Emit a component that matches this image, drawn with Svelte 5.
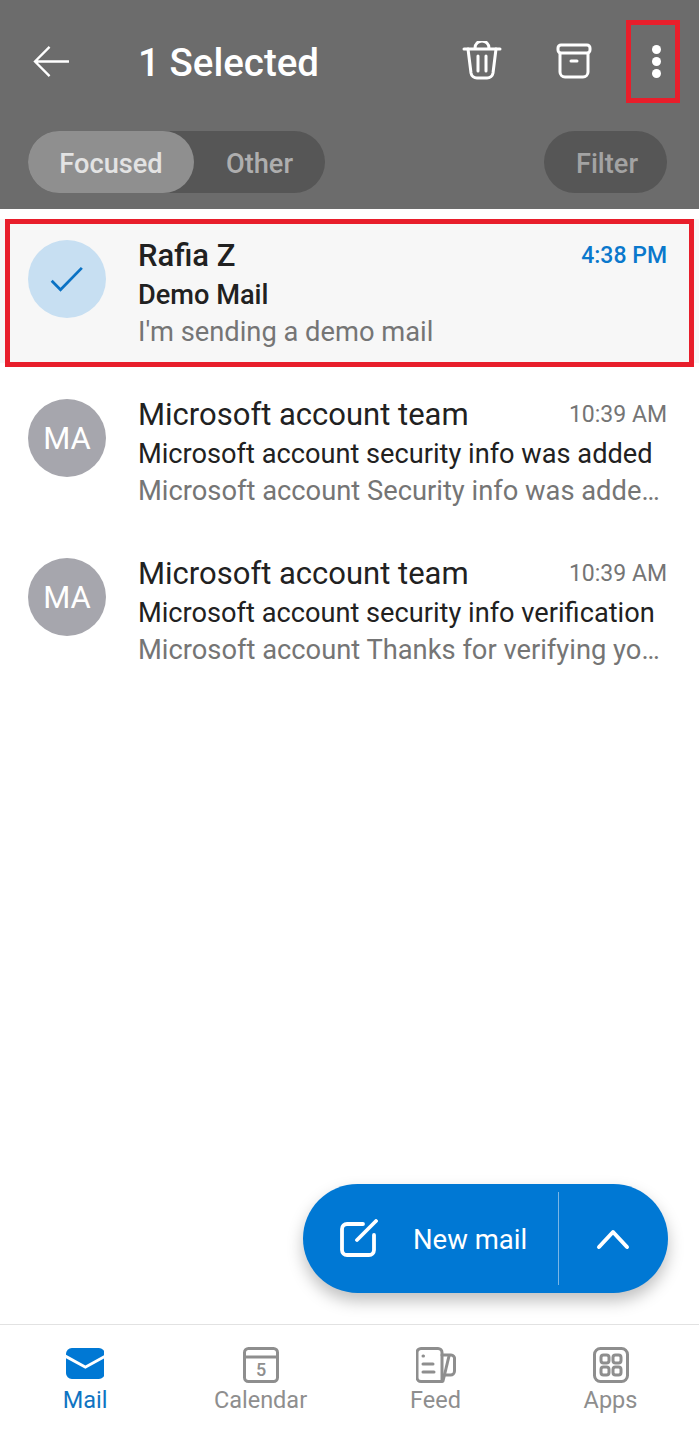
<script>
  const mails = [
    {
      sender: 'Rafia Z',
      subject: 'Demo Mail',
      preview: "I'm sending a demo mail",
      time: '4:38 PM',
      selected: true
    },
    {
      sender: 'Microsoft account team',
      subject: 'Microsoft account security info was added',
      preview: 'Microsoft account Security info was added to the account',
      time: '10:39 AM',
      selected: false
    },
    {
      sender: 'Microsoft account team',
      subject: 'Microsoft account security info verification',
      preview: 'Microsoft account Thanks for verifying your security info',
      time: '10:39 AM',
      selected: false
    }
  ];
</script>

<div class="screen">
  <header class="header">
    <div class="toolbar">
      <svg class="back" viewBox="0 0 38 34" fill="none" stroke="currentColor" stroke-width="2.4">
        <path d="M37 17H2M17 2 2 17l15 15" />
      </svg>
      <h1 class="title">1 Selected</h1>
      <svg class="trash" viewBox="0 0 40 40" fill="none" stroke="currentColor" stroke-width="3" stroke-linecap="round" stroke-linejoin="round">
        <path d="M2 8h36M13 8V7a7 7 0 0 1 14 0v1" />
        <path d="M6 8l3 24a6 6 0 0 0 6 5h10a6 6 0 0 0 6-5l3-24" />
        <path d="M16 15v15M24 15v15" />
      </svg>
      <svg class="archive" viewBox="0 0 36 36" fill="none" stroke="currentColor" stroke-width="3" stroke-linecap="round" stroke-linejoin="round">
        <rect x="2" y="2" width="32" height="8" rx="3" />
        <path d="M4 10v19a5 5 0 0 0 5 5h18a5 5 0 0 0 5-5V10" />
        <path d="M15 18h6" />
      </svg>
      <div class="more">
        <span></span><span></span><span></span>
      </div>
    </div>
    <div class="filters">
      <div class="tabs">
        <span class="tab active">Focused</span>
        <span class="tab">Other</span>
      </div>
      <span class="filter">Filter</span>
    </div>
  </header>

  <main class="list">
    {#each mails as mail}
      <div class="mail" class:selected={mail.selected}>
        {#if mail.selected}
          <div class="avatar check">
            <svg viewBox="0 0 36 28" fill="none" stroke="#0a72c4" stroke-width="3">
              <path d="M1.500 16 11 25.500 34 2" />
            </svg>
          </div>
        {:else}
          <div class="avatar">MA</div>
        {/if}
        <div class="body">
          <div class="top">
            <span class="sender">{mail.sender}</span>
            <span class="time">{mail.time}</span>
          </div>
          <div class="subject">{mail.subject}</div>
          <div class="preview">{mail.preview}</div>
        </div>
      </div>
    {/each}
    <div class="highlight"></div>
  </main>

  <div class="fab">
    <div class="fab-main">
      <svg viewBox="0 0 38 38" fill="none" stroke="currentColor" stroke-width="3.800" stroke-linecap="round" stroke-linejoin="round">
        <path d="M23 5H7a5 5 0 0 0-5 5v21a5 5 0 0 0 5 5h22a5 5 0 0 0 5-5V16" />
        <path d="M17 21 36 2" />
      </svg>
      <span>New mail</span>
    </div>
    <div class="fab-side">
      <svg viewBox="0 0 34 22" fill="none" stroke="currentColor" stroke-width="4" stroke-linecap="round" stroke-linejoin="round">
        <path d="M3 19 17 4l14 15" />
      </svg>
    </div>
  </div>

  <nav class="nav">
    <div class="nav-item active">
      <svg viewBox="0 0 40 32">
        <path fill="#0078d4" d="M0 6a6 6 0 0 1 6-6h28a6 6 0 0 1 6 6v1L20 18 0 7z" />
        <path fill="#0078d4" d="M0 10.500 20 21.500 40 10.500V26a6 6 0 0 1-6 6H6a6 6 0 0 1-6-6z" />
      </svg>
      <span>Mail</span>
    </div>
    <div class="nav-item">
      <svg viewBox="0 0 36 36" fill="none" stroke="#8e8e8e" stroke-width="3">
        <rect x="1.500" y="1.500" width="33" height="33" rx="4" />
        <path d="M2 10h32" />
        <text x="18" y="28.500" text-anchor="middle" class="date">5</text>
      </svg>
      <span>Calendar</span>
    </div>
    <div class="nav-item">
      <svg viewBox="0 0 40 36" fill="none" stroke="#8e8e8e" stroke-width="3" stroke-linejoin="round" stroke-linecap="round">
        <path d="M5 1.500h17a4 4 0 0 1 4 4V34.500H5a4 4 0 0 1-4-4v-25a4 4 0 0 1 4-4z" />
        <path d="M26 8h9a3.500 3.500 0 0 1 3.500 4v12a4 4 0 0 1-4 4H28" />
        <path d="M33 9 27 34" />
        <path d="M7 17h10M7 25h11" />
        <path d="M7 9h.5" />
      </svg>
      <span>Feed</span>
    </div>
    <div class="nav-item">
      <svg viewBox="0 0 36 36" fill="none" stroke="#8e8e8e" stroke-width="3">
        <rect x="1.500" y="1.500" width="33" height="33" rx="6" />
        <rect x="8" y="8" width="8" height="8" rx="2.500" />
        <rect x="20" y="8" width="8" height="8" rx="2.500" />
        <rect x="8" y="20" width="8" height="8" rx="2.500" />
        <rect x="20" y="20" width="8" height="8" rx="2.500" />
      </svg>
      <span>Apps</span>
    </div>
  </nav>
</div>

<style>
  :global(body) {
    margin: 0;
    background: #fff;
  }

  .screen {
    position: relative;
    display: flex;
    flex-direction: column;
    height: 1435px;
    overflow: hidden;
    font-family: Roboto, "Liberation Sans", sans-serif;
    color: #212121;
  }

  /* header */
  .header {
    height: 209px;
    box-sizing: border-box;
    background: #6c6c6c;
    padding: 19px 32px 16px 28px;
    display: flex;
    flex-direction: column;
    color: #fff;
  }

  .toolbar {
    display: flex;
    align-items: center;
    height: 84px;
  }

  .back {
    width: 37px;
    height: 33px;
    margin-left: 5px;
  }

  .title {
    margin: 2px 0 0 68px;
    font-size: 38.5px;
    font-weight: 500;
    flex: 1;
  }

  .trash {
    width: 40px;
    height: 40px;
    margin-right: 54px;
  }

  .archive {
    width: 36px;
    height: 36px;
    margin-right: 58px;
  }

  .more {
    position: relative;
    width: 13px;
    margin-right: 4px;
    display: flex;
    flex-direction: column;
    align-items: center;
    gap: 3px;
  }

  .more span {
    width: 9px;
    height: 9px;
    border-radius: 50%;
    background: #fff;
  }

  .more::after {
    content: "";
    position: absolute;
    left: -24px;
    top: -25px;
    width: 44px;
    height: 73px;
    border: 5px solid #e81e2b;
  }

  .filters {
    display: flex;
    justify-content: space-between;
    margin-top: 28px;
  }

  .tabs {
    display: flex;
    width: 297px;
    height: 62px;
    border-radius: 31px;
    background: #565656;
    font-size: 27.2px;
    font-weight: 500;
  }

  .tab {
    display: flex;
    align-items: center;
    justify-content: center;
    border-radius: 31px;
    flex: 1;
    box-sizing: border-box;
    padding-top: 3px;
    color: #aeaeae;
  }

  .tab.active {
    flex: 0 0 166px;
    background: #8f8f8f;
    color: #e3e3e3;
  }

  .filter {
    display: flex;
    align-items: center;
    justify-content: center;
    box-sizing: border-box;
    width: 123px;
    height: 62px;
    padding: 3px 0 0 3px;
    border-radius: 31px;
    background: #565656;
    color: #a3a3a3;
    font-size: 27.2px;
    font-weight: 500;
  }

  /* mail list */
  .list {
    position: relative;
    flex: 1;
  }

  .mail {
    display: flex;
    height: 159px;
    box-sizing: border-box;
    padding: 31px 32px 0 28px;
  }

  .mail.selected {
    background: linear-gradient(#fff 10px, #f7f7f7 10px, #f7f7f7 154px, #fff 154px);
  }

  .highlight {
    position: absolute;
    left: 5px;
    top: 10px;
    width: 689px;
    height: 148px;
    box-sizing: border-box;
    border: 5px solid #e81e2b;
  }

  .avatar {
    flex: none;
    width: 78px;
    height: 78px;
    border-radius: 50%;
    background: #a6a6ad;
    color: #fff;
    font-size: 31px;
    display: flex;
    align-items: center;
    justify-content: center;
  }

  .avatar.check {
    background: #c7dff2;
  }

  .avatar.check svg {
    width: 34px;
    height: 26px;
  }

  .body {
    flex: 1;
    min-width: 0;
    margin-left: 32px;
  }

  .top {
    display: flex;
    justify-content: space-between;
    align-items: center;
    height: 30px;
    margin-top: 0;
  }

  .sender {
    font-size: 31px;
  }

  .time {
    font-size: 23px;
    color: #757575;
  }

  .subject {
    margin-top: 9px;
    font-size: 27.2px;
    line-height: 32px;
    white-space: nowrap;
  }

  .preview {
    margin-top: 5px;
    font-size: 27.3px;
    line-height: 32px;
    color: #757575;
    white-space: nowrap;
    overflow: hidden;
    text-overflow: ellipsis;
  }

  .selected .sender {
    font-weight: 500;
  }

  .selected .subject {
    font-weight: 500;
  }

  .selected .time {
    color: #0a78cc;
    font-weight: 500;
  }

  /* compose button */
  .fab {
    position: absolute;
    left: 303px;
    top: 1184px;
    width: 365px;
    height: 109px;
    border-radius: 55px;
    background: #0078d4;
    color: #fff;
    display: flex;
    box-shadow: 0 8px 16px rgba(0, 0, 0, 0.25);
  }

  .fab-main {
    flex: 0 0 256px;
    display: flex;
    align-items: center;
    box-sizing: border-box;
    padding: 2px 0 0 37px;
    margin: 8px 0;
    border-right: 1px solid #7ab6e6;
    font-size: 27.5px;
  }

  .fab-main svg {
    width: 38px;
    height: 38px;
    margin: -3px 35px 0 0;
  }

  .fab-side {
    flex: 1;
    display: flex;
    align-items: center;
    justify-content: center;
  }

  .fab-side svg {
    width: 34px;
    height: 22px;
    margin-right: 2px;
  }

  /* bottom tabs */
  .nav {
    height: 111px;
    border-top: 1px solid #e2e2e2;
    display: flex;
    padding: 22px 0 0 0;
    box-sizing: border-box;
  }

  .nav-item {
    display: flex;
    flex-direction: column;
    align-items: center;
    width: 175px;
    color: #8e8e8e;
    font-size: 23.5px;
  }

  .nav-item.active {
    color: #0f74c2;
    width: 170px;
    margin-right: 3px;
  }

  .nav-item svg {
    height: 36px;
    width: auto;
  }

  .nav-item.active svg {
    height: 31px;
    margin: 1px 0 4px;
  }

  .nav-item span {
    margin-top: 3px;
  }

  .date {
    font-family: Roboto, sans-serif;
    font-size: 18px;
    font-weight: 500;
    fill: #8e8e8e;
    stroke: none;
  }
</style>
